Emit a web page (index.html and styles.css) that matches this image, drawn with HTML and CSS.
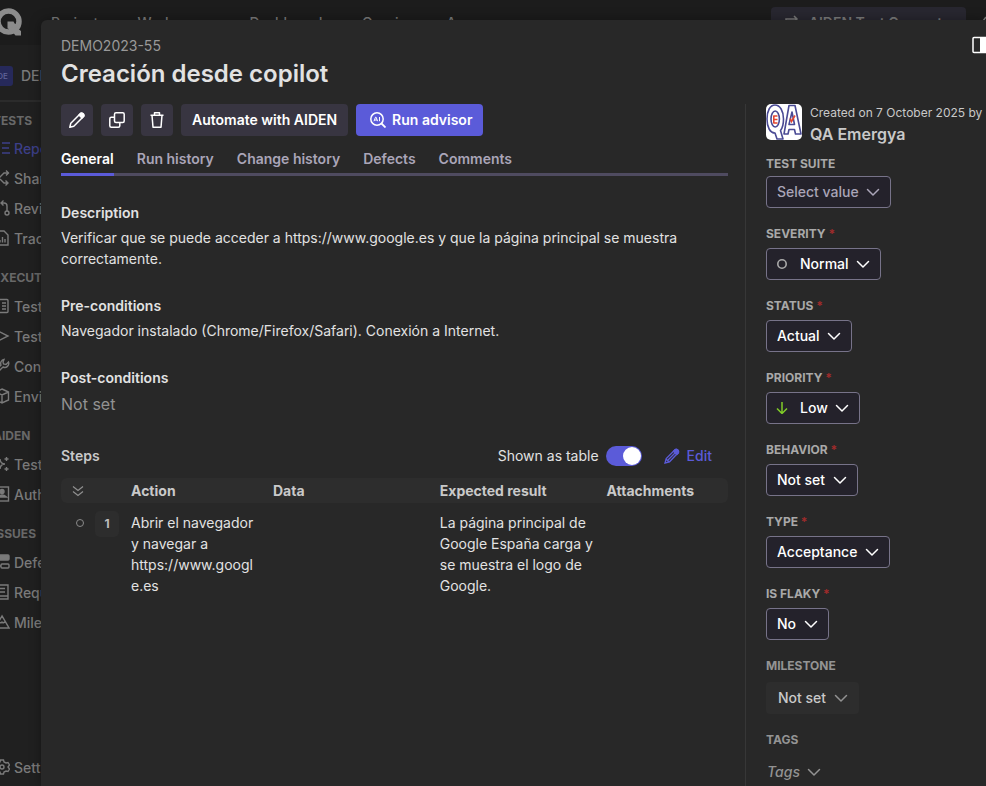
FILE: index.html
```html
<!DOCTYPE html>
<html lang="en">
<head>
<meta charset="utf-8">
<meta name="viewport" content="width=device-width, initial-scale=1">
<title>DEMO2023-55 Creación desde copilot</title>
<link rel="stylesheet" href="styles.css">
</head>
<body>
<svg class="sprite" aria-hidden="true">
  <symbol id="chevron" viewBox="0 0 16 16"><path d="M2.500 5.500 8 11l5.500-5.500" fill="none" stroke="currentColor" stroke-width="1.500" stroke-linecap="round" stroke-linejoin="round"/></symbol>
</svg>

<div class="app">
  <header class="topbar">
    <svg class="logo" viewBox="0 0 30 30" aria-hidden="true"><circle cx="14.500" cy="13.500" r="10.500" fill="none" stroke="currentColor" stroke-width="5.500"/><path d="M13.500 13.500h6l3.500 6.500 4 3v4.500h-5.500l-5-6-3-1z" fill="currentColor"/><path d="M15 22c4-.5 6-3 7-6" fill="none" stroke="currentColor" stroke-width="3"/></svg>
    <nav class="topnav">
      <a href="#">Projects</a>
      <a href="#" class="nav-workspace">Workspace</a>
      <a href="#">Dashboards</a>
      <a href="#">Queries</a>
      <a href="#">Apps</a>
    </nav>
    <button class="converter" type="button">
      <svg width="18" height="18" viewBox="0 0 18 18" fill="none" stroke="currentColor" stroke-width="1.500" aria-hidden="true"><path d="M3 8V5h11M11 2l3 3-3 3M15 10v3H4M7 10l-3 3 3 3"/></svg>
      AIDEN Test Converter
    </button>
    <svg class="search" viewBox="0 0 16 16" fill="none" stroke="currentColor" stroke-width="1.500" aria-hidden="true"><circle cx="7" cy="7" r="5.500"/><path d="m11 11 4 4"/></svg>
  </header>

  <aside class="sidebar">
    <div class="project"><span class="project-badge">DE</span><span>DEMO2023</span></div>
    <nav class="menu">
      <h2>TESTS</h2>
      <a href="#" class="current"><svg viewBox="0 0 16 16"><path d="M1 3h4M8 3h8M1 8h2M8 8h7M1 13h4M8 13h8"/></svg>Repository</a>
      <a href="#"><svg viewBox="0 0 16 16"><path d="M1 8h4l5-5h5M12 .500 14.500 3 12 5.500M6 9l4 4h4M11.500 10.500 14 13l-2.500 2.500"/></svg>Shared steps</a>
      <a href="#"><svg viewBox="0 0 16 16"><circle cx="3" cy="13" r="2"/><circle cx="13" cy="13" r="2"/><path d="M3 11V1M13 11V6q0-3-3-3H7M9.500 .500 7 3l2.500 2.500"/></svg>Review</a>
      <a href="#"><svg viewBox="0 0 16 16"><path d="M3 1h7l4 4v10H3zM6 12.500V10M8.500 12.500V7M11 12.500V9"/></svg>Traceability</a>
      <h2>EXECUTION</h2>
      <a href="#"><svg viewBox="0 0 16 16"><rect x="2" y="1.500" width="12" height="13" rx="1"/><path d="M5 5h1M8 5h4M5 8h1M8 8h4M5 11h1M8 11h4"/></svg>Test plans</a>
      <a href="#"><svg viewBox="0 0 16 16"><path d="m3 2.500 11 5.500-11 5.500z"/></svg>Test runs</a>
      <a href="#"><svg viewBox="0 0 16 16"><path d="M10 1.500a4 4 0 0 0-3 5.500L2 12a1.500 1.500 0 0 0 2 2l5-5a4 4 0 0 0 5.500-5l-2.500 2.500L9.500 6 9 4z"/></svg>Configurations</a>
      <a href="#"><svg viewBox="0 0 16 16"><path d="m8 1 6.500 3v8L8 15l-6.500-3V4zM1.500 4 8 7l6.500-3M8 7v8"/></svg>Environments</a>
      <h2>AIDEN</h2>
      <a href="#"><svg viewBox="0 0 16 16"><path d="M6 3q.5 5 5 5-4.500 0-5 5-.5-5-5-5 4.500 0 5-5zM12.500 1v4M10.500 3h4M12.500 11v4M10.500 13h4"/></svg>Test generator</a>
      <a href="#"><svg viewBox="0 0 16 16"><rect x="1.500" y="1" width="13" height="14"/><circle cx="8" cy="5.500" r="2" fill="currentColor"/><path d="M3.500 11q4.500-4 9 0z" fill="currentColor"/></svg>Authoring</a>
      <h2>ISSUES</h2>
      <a href="#"><svg viewBox="0 0 16 16"><rect x="2" y="1" width="13" height="5" rx="1" fill="currentColor"/><rect x="7" y="10" width="8" height="4" rx="1"/><path d="M3 6v6h4"/></svg>Defects</a>
      <a href="#"><svg viewBox="0 0 16 16"><path d="M2 1h12v14H4q-2 0-2-2zM2 12h12M5 4.500h6M5 8h6"/></svg>Requirements</a>
      <a href="#"><svg viewBox="0 0 16 16"><path d="M8 2 1 14h14zM5 8l2 1 1-1 1 1 2-1"/></svg>Milestones</a>
      <a href="#" class="settings"><svg viewBox="0 0 16 16"><path d="M6.500 1h3l.5 2 2 1 2-.5 1.500 2.500L14 8l1.500 2-1.500 2.500-2-.5-2 1-.5 2h-3L6 13l-2-1-2 .5L.500 10 2 8 .500 6 2 3.500 4 4l2-1z"/><circle cx="8" cy="8" r="2"/></svg>Settings</a>
    </nav>
  </aside>
</div>

<div class="dialog" role="dialog" aria-labelledby="case-title">
  <header class="dialog-head">
    <div>
      <div class="case-id">DEMO2023-55</div>
      <h1 id="case-title">Creación desde copilot</h1>
    </div>
    <button class="panel-toggle" type="button" aria-label="Toggle side panel">
      <svg width="20" height="18" viewBox="0 0 20 18"><rect x="1" y="1.500" width="18" height="15" rx="1" fill="none" stroke="#fff" stroke-width="1.500"/><path d="M8 1.500h11v15H8z" fill="#fff"/></svg>
    </button>
  </header>

  <div class="dialog-body">
    <main class="content">
      <div class="actions">
        <button class="btn icon" type="button" aria-label="Edit case"><svg viewBox="0 0 16 16"><path d="m.800 15.200 1-4L11 2q1.400-1.400 3 0t0 3L4.800 14.200z"/><path d="M10 3 13 6 15 4Q15 1 12 1z" fill="currentColor"/></svg></button>
        <button class="btn icon" type="button" aria-label="Clone case"><svg viewBox="0 0 16 16"><rect x="5.500" y=".800" width="9.700" height="9.700" rx="1.500"/><path d="M5.500 5.200H2.300Q.800 5.200.800 6.700v7q0 1.500 1.500 1.500h7q1.500 0 1.500-1.500v-3.200"/></svg></button>
        <button class="btn icon" type="button" aria-label="Delete case"><svg viewBox="0 0 16 16"><path d="M1.500 3.200h13M5.500 3V.800h5V3M3 3.200l1 12h8l1-12"/></svg></button>
        <button class="btn" type="button">Automate with AIDEN</button>
        <button class="btn primary" type="button"><svg viewBox="0 0 16 16"><circle cx="7" cy="7" r="6.200"/><path d="m11.500 11.500 4 4" stroke-width="1.800"/><path d="m4 9.200 1.500-4h.6l1.500 4M4.600 8h2.400M9.500 5v4.200" stroke-width="1"/></svg>Run advisor</button>
      </div>

      <div class="tabs" role="tablist">
        <button type="button" role="tab" aria-selected="true">General</button>
        <button type="button" role="tab" aria-selected="false">Run history</button>
        <button type="button" role="tab" aria-selected="false">Change history</button>
        <button type="button" role="tab" aria-selected="false">Defects</button>
        <button type="button" role="tab" aria-selected="false">Comments</button>
      </div>

      <section class="block">
        <h2>Description</h2>
        <p>Verificar que se puede acceder a https://www.google.es y que la página principal se muestra correctamente.</p>
      </section>
      <section class="block">
        <h2>Pre-conditions</h2>
        <p>Navegador instalado (Chrome/Firefox/Safari). Conexión a Internet.</p>
      </section>
      <section class="block">
        <h2>Post-conditions</h2>
        <p class="empty">Not set</p>
      </section>

      <section class="steps">
        <div class="steps-head">
          <h2>Steps</h2>
          <label for="as-table">Shown as table</label>
          <input class="switch" id="as-table" type="checkbox" checked>
          <button class="edit" type="button"><svg viewBox="0 0 16 16"><path d="m1 15 1.200-4.500L11 1.700q1.300-1 2.600.500 1.500 1.300.500 2.600L5.500 13.800zM10 2.800 13.200 6M4 12l7-7M2 11l3 3"/><path d="m9.500 3.200 3.300 3.300L14.500 5Q15 3 14 2T11 1.700z" fill="currentColor"/></svg>Edit</button>
        </div>
        <table>
          <colgroup><col class="c-mark"><col class="c-num"><col class="c-action"><col class="c-data"><col class="c-result"><col></colgroup>
          <thead>
            <tr><th class="mark"><svg width="12" height="12" viewBox="0 0 12 12" fill="none" stroke="currentColor" stroke-width="1.200"><path d="m1 1.500 5 4 5-4M1 6.500l5 4 5-4"/></svg></th><th></th><th>Action</th><th>Data</th><th>Expected result</th><th>Attachments</th></tr>
          </thead>
          <tbody>
            <tr><td class="mark"><span class="dot"></span></td><td class="num"><span>1</span></td><td>Abrir el navegador y navegar a https://www.google.es</td><td></td><td>La página principal de Google España carga y se muestra el logo de Google.</td><td></td></tr>
          </tbody>
        </table>
      </section>
    </main>

    <aside class="details">
      <div class="author">
        <svg class="avatar" viewBox="0 0 36 36" aria-hidden="true"><rect width="36" height="36" rx="5" fill="#fff"/><g fill="none" stroke="#4a4a94" stroke-width="1.600" stroke-linejoin="round"><path d="M9 1C4 1 1 7 1 15s3 14 8 14l2 6h6l-2.500-8.500C16.500 24 17.500 20 17.500 15 17.500 7 14 1 9 1z"/><ellipse cx="9.200" cy="15" rx="4.200" ry="8"/><path d="M23 1.500h6L35 30h-5.500l-1-4.500h-5.500l-1 4.500H18zM26 8l-3 12.500h5.500z"/></g><path d="M7.200 12h4.300M7.200 15.500h4.300M7.200 19h4.300M7.800 12v7M24 14.500l1.500 3 3.500-6" fill="none" stroke="#e3452f" stroke-width="1.600"/></svg>
        <div><div class="created">Created on 7 October 2025 by</div><div class="name">QA Emergya</div></div>
      </div>

      <div class="field first"><label for="suite">TEST SUITE</label>
        <div class="pick muted"><select id="suite"><option>Select value</option></select><svg class="chev"><use href="#chevron"/></svg></div></div>
      <div class="field"><label for="severity">SEVERITY <i>*</i></label>
        <div class="pick marked"><select id="severity"><option>Normal</option></select><svg class="lead" viewBox="0 0 12 12"><circle cx="6" cy="6" r="4.200" fill="none" stroke="#aaa" stroke-width="1.600"/></svg><svg class="chev"><use href="#chevron"/></svg></div></div>
      <div class="field"><label for="status">STATUS <i>*</i></label>
        <div class="pick"><select id="status"><option>Actual</option></select><svg class="chev"><use href="#chevron"/></svg></div></div>
      <div class="field"><label for="priority">PRIORITY <i>*</i></label>
        <div class="pick marked"><select id="priority"><option>Low</option></select><svg class="lead" viewBox="0 0 12 12"><path d="M6 0v11M1 6.500l5 5 5-5" fill="none" stroke="#80cc28" stroke-width="1.500"/></svg><svg class="chev"><use href="#chevron"/></svg></div></div>
      <div class="field"><label for="behavior">BEHAVIOR <i>*</i></label>
        <div class="pick"><select id="behavior"><option>Not set</option></select><svg class="chev"><use href="#chevron"/></svg></div></div>
      <div class="field"><label for="type">TYPE <i>*</i></label>
        <div class="pick"><select id="type"><option>Acceptance</option></select><svg class="chev"><use href="#chevron"/></svg></div></div>
      <div class="field"><label for="flaky">IS FLAKY <i>*</i></label>
        <div class="pick"><select id="flaky"><option>No</option></select><svg class="chev"><use href="#chevron"/></svg></div></div>
      <div class="field loose"><label for="milestone">MILESTONE</label>
        <div class="pick soft"><select id="milestone"><option>Not set</option></select><svg class="chev"><use href="#chevron"/></svg></div></div>
      <div class="field loose"><label for="tags">TAGS</label>
        <div class="pick bare"><select id="tags"><option>Tags</option></select><svg class="chev"><use href="#chevron"/></svg></div></div>
    </aside>
  </div>
</div>
</body>
</html>
```
FILE: styles.css
```css
* { box-sizing: border-box; }

html, body { height: 100%; }

body {
  margin: 0;
  overflow: hidden;
  background: #202020;
  color: #e2e2e2;
  font: 14px/21px Inter, "Liberation Sans", sans-serif;
}

button, select, input { margin: 0; font: inherit; color: inherit; }
button { padding: 0; border: 0; background: none; cursor: pointer; }
h1, h2, p { margin: 0; }
a { color: inherit; text-decoration: none; }
.sprite { position: absolute; width: 0; height: 0; }

/* Page behind the dialog */
.app { height: 100%; color: #7a7a7a; }

.topbar {
  display: flex;
  align-items: center;
  height: 45px;
  background: #1c1c1c;
  font-weight: 500;
}
.logo { flex: none; width: 30px; height: 30px; margin-left: -6px; color: #8c8c8c; }
.topnav { display: flex; flex: 1; gap: 32px; margin-left: 27px; white-space: nowrap; }
.nav-workspace { margin-right: 4px; }
.converter {
  display: flex;
  align-items: center;
  gap: 8px;
  height: 32px;
  padding: 0 10px 0 12px;
  border-radius: 4px;
  background: #282730;
  font-weight: 600;
}
.search { flex: none; width: 16px; height: 16px; margin: 0 -12px 0 16px; }

.sidebar { width: 220px; margin-left: -8px; font-weight: 500; }
.project {
  display: flex;
  align-items: center;
  gap: 8px;
  height: 57px;
  padding-top: 6px;
  border-bottom: 2px solid #2b2b2b;
}
.project-badge {
  width: 21px;
  height: 20px;
  border-radius: 3px;
  background: #26295a;
  color: #62659a;
  font-size: 8px;
  line-height: 20px;
  text-align: center;
}
.menu { padding-top: 10px; }
.menu h2 {
  height: 38px;
  padding: 16px 0 0 1px;
  color: #686868;
  font-size: 12px;
  line-height: 18px;
  font-weight: 700;
}
.menu h2:first-child { height: 21px; padding-top: 0; }
.menu a { display: flex; align-items: center; gap: 4px; height: 30px; }
.menu a svg { width: 16px; height: 16px; margin-left: 2px; fill: none; stroke: currentColor; stroke-width: 1.4; }
.menu .current { color: #3c3f88; }
.menu .settings { margin-top: 115px; }

/* Dialog */
.dialog {
  position: absolute;
  inset: 20px 0 0 41px;
  display: flex;
  flex-direction: column;
  overflow: hidden;
  padding-left: 20px;
  border-radius: 6px 0 0 0;
  background: #282828;
  box-shadow: 0 0 12px rgba(0, 0, 0, .35);
}
.dialog-head { display: flex; justify-content: space-between; height: 84px; padding-top: 16px; }
.case-id { color: #999; line-height: 20px; }
h1 { color: #e2e2e2; font-size: 24px; line-height: 36px; font-weight: 600; }
.panel-toggle { align-self: flex-start; width: 14px; height: 18px; }
.panel-toggle svg { display: block; }

.dialog-body { display: flex; flex: 1; min-height: 0; }
.content { flex: 1; min-width: 0; padding-right: 17px; }

.actions { display: flex; gap: 8px; }
.btn {
  display: flex;
  align-items: center;
  justify-content: center;
  gap: 6px;
  height: 32px;
  padding: 0 11px;
  border-radius: 4px;
  background: #383541;
  color: #fff;
  line-height: 20px;
  font-weight: 600;
}
.btn svg { width: 16px; height: 16px; fill: none; stroke: currentColor; stroke-width: 1.5; stroke-linejoin: round; }
.btn.icon { width: 32px; padding: 0; }
.btn.primary { padding-left: 14px; background: #5b5bd9; }

.tabs { display: flex; gap: 23px; height: 40px; border-bottom: 3px solid #4f4b60; }
.tabs button {
  height: 40px;
  padding-top: 8px;
  border-bottom: 3px solid transparent;
  color: #aaa5b8;
  font-weight: 600;
}
.tabs [aria-selected="true"] { border-color: #5b5bd9; color: #fff; }

h2 { font-size: 14px; line-height: 21px; font-weight: 600; }
.block { margin-top: 26px; }
.block p { margin-top: 4px; }
.block .empty { color: #929292; font-size: 16px; line-height: 24px; }

.steps { margin-top: 26px; }
.steps-head { display: flex; align-items: center; height: 27px; padding-right: 16px; }
.steps-head h2 { flex: 1; color: #c9c9c9; }
.steps-head label { margin-right: 7px; }
.switch {
  appearance: none;
  display: flex;
  width: 36px;
  height: 20px;
  padding: 1px;
  border-radius: 10px;
  background: #5b5bd9;
}
.switch::after { content: ""; width: 18px; height: 18px; border-radius: 50%; background: #fff; }
.switch:checked { justify-content: flex-end; }
.edit { display: flex; align-items: center; gap: 7px; margin-left: 22px; color: #5b5bd9; font-weight: 500; }
.edit svg { width: 16px; height: 16px; fill: none; stroke: currentColor; stroke-width: 1.3; }

table { width: 100%; margin-top: 9px; border-spacing: 0; table-layout: fixed; }
th { height: 25px; padding: 0; background: #2d2d2d; color: #c9c9c9; font-weight: 700; text-align: left; }
th:first-child { border-radius: 6px 0 0 6px; }
th:last-child { border-radius: 0 6px 6px 0; }
td { padding: 9px 12px 0 0; vertical-align: top; overflow-wrap: anywhere; }
.c-mark { width: 34px; }
.c-num { width: 36px; }
.c-action { width: 142px; }
.c-data, .c-result { width: 25%; }
.mark { color: #919191; }
th.mark { padding-left: 11px; }
th.mark svg { display: block; }
td.mark { padding: 16px 0 0 15px; }
.dot { display: block; width: 8px; height: 8px; border: 1px solid #8a8a8a; border-radius: 50%; }
td.num { padding: 8px 0 0; }
.num span {
  display: block;
  width: 24px;
  border-radius: 5px;
  background: #2d2d2d;
  color: #bdbdbd;
  font-size: 12px;
  line-height: 26px;
  font-weight: 700;
  text-align: center;
}

.details { flex: none; width: 241px; padding-left: 20px; border-left: 1px solid #373737; white-space: nowrap; }
.author { display: flex; gap: 8px; height: 51px; }
.avatar { flex: none; width: 36px; height: 36px; }
.created { color: #c9c9c9; font-size: 12px; line-height: 18px; }
.name { color: #c9c9c9; font-size: 16px; line-height: 24px; font-weight: 600; }

.field { display: flex; flex-direction: column; align-items: flex-start; gap: 5px; margin-bottom: 17px; }
.field.first { gap: 3px; }
.field.loose { gap: 7px; }
.field > label { color: #a9a9a9; font-size: 12px; line-height: 18px; font-weight: 700; }
.field.loose > label { color: #949494; }
.field i { color: #a02b2b; font-style: normal; }

/* Select box with its icons stacked in one grid cell */
.pick { display: grid; align-items: center; color: #fff; }
.pick > * { grid-area: 1 / 1; }
.pick select {
  appearance: none;
  height: 32px;
  padding: 0 31px 1px 10px;
  border: 1px solid #777389;
  border-radius: 4px;
  background: #24222b;
  font-weight: 500;
}
.pick.marked select { padding-left: 33px; }
.pick svg { pointer-events: none; }
.chev { justify-self: end; width: 16px; height: 16px; margin-right: 10px; }
.lead { width: 12px; height: 12px; margin-left: 10px; }
.pick.muted { color: #aaa5b8; }
.pick.soft { color: #c9c9c9; }
.pick.soft select { padding-left: 11px; border-color: transparent; background: #2d2d2d; }
.pick.bare { color: #929292; }
.pick.bare select { padding-left: 0; border-color: transparent; background: none; font-style: italic; }
.pick.soft .chev, .pick.bare .chev { color: #929292; }
```
